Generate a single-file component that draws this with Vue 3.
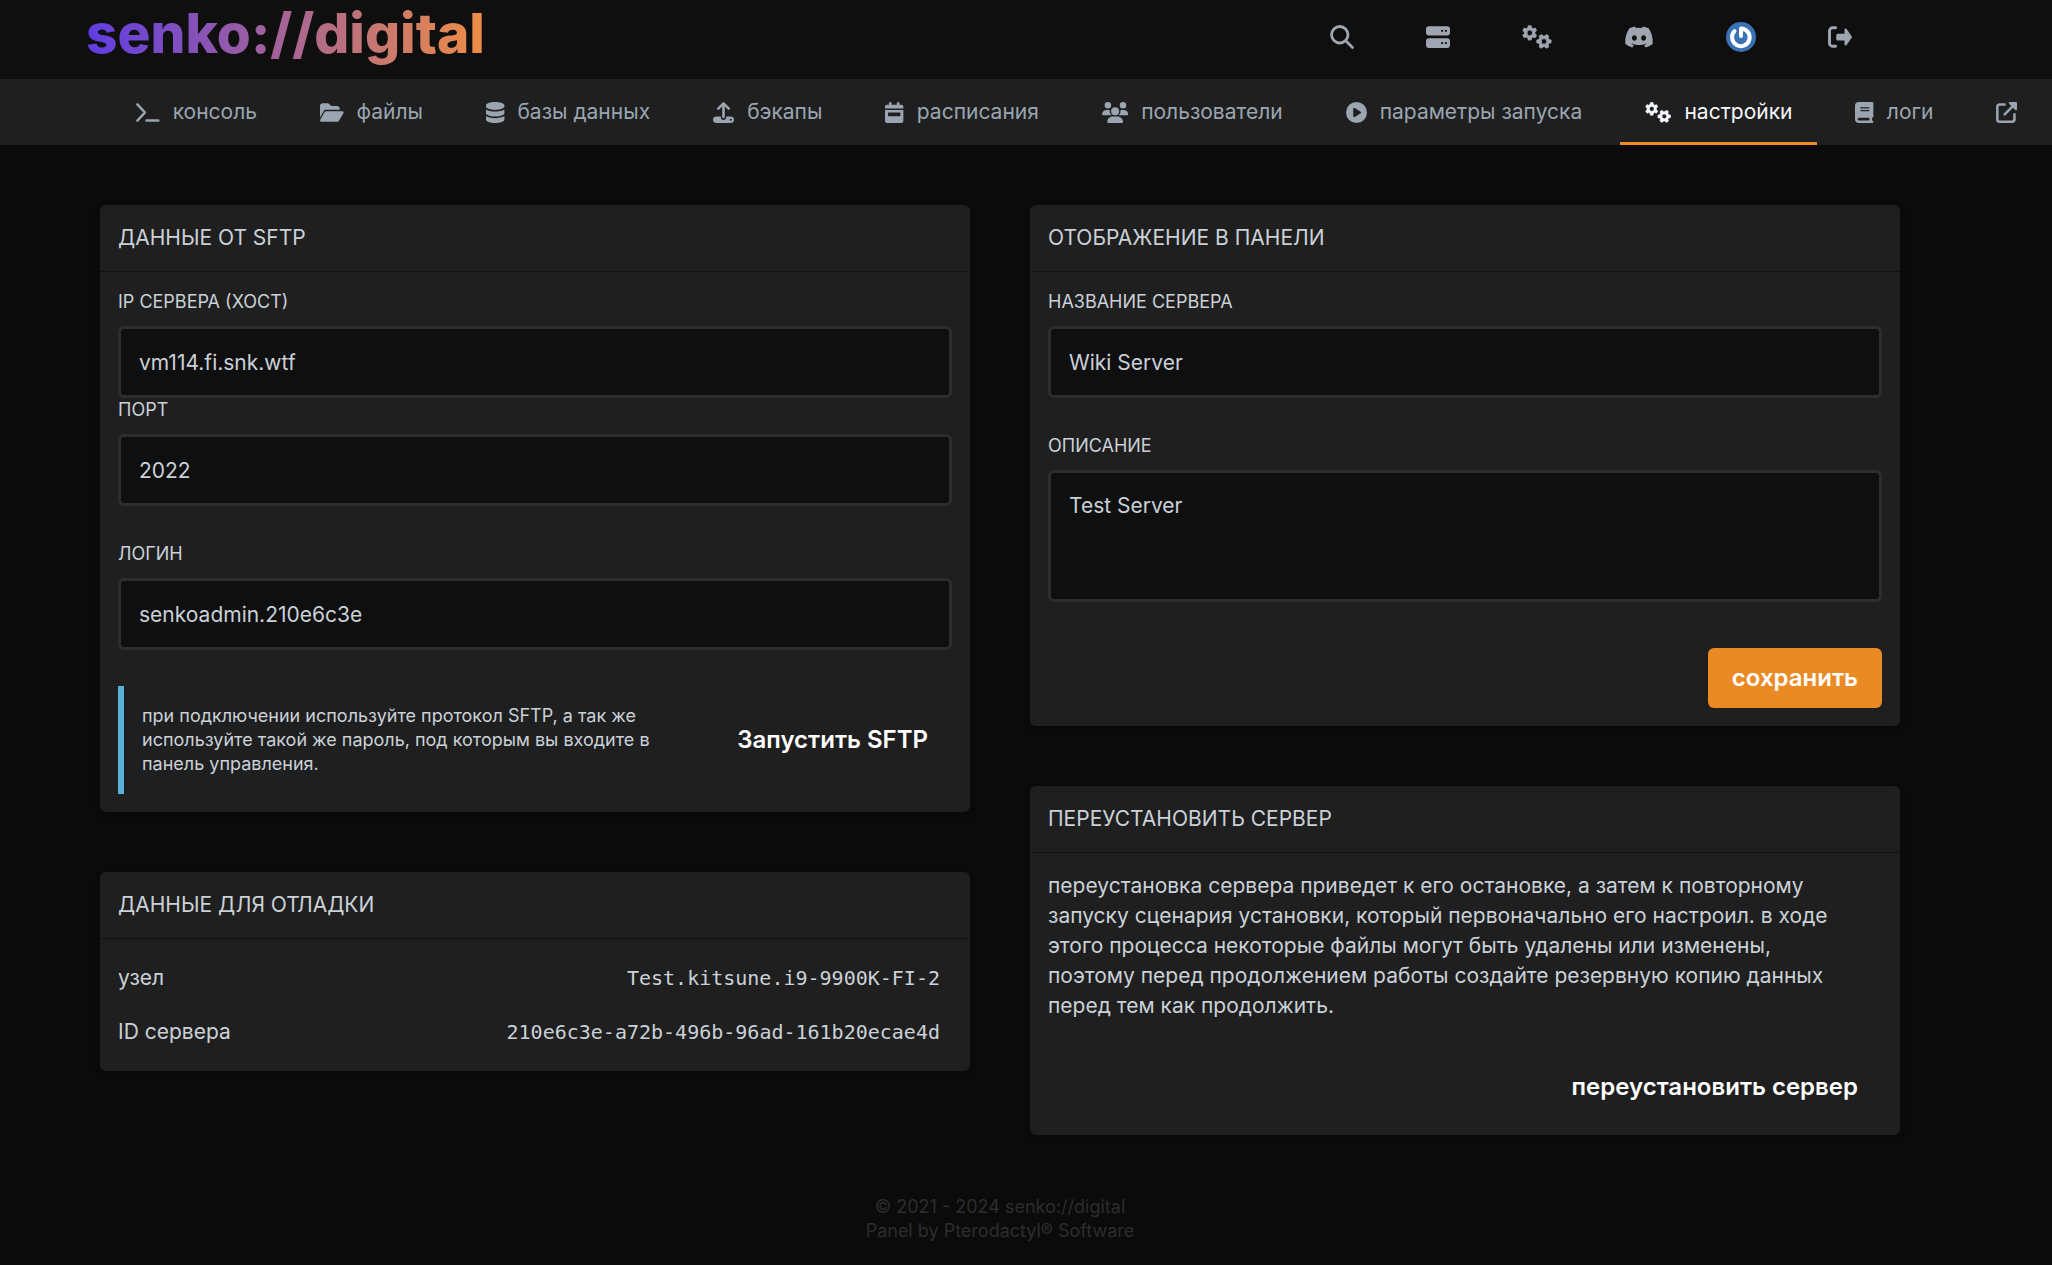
<script setup>
import { ref } from 'vue'

// Outline of a cog wheel with six teeth and a round hole, in icon units.
function gear(cx, cy, outer, inner, hole, turn) {
  const points = []
  for (let i = 0; i < 6; i++) {
    const base = ((i * 60 + turn) * Math.PI) / 180
    const steps = [[-0.36, inner], [-0.2, outer], [0.2, outer], [0.36, inner]]
    for (const [offset, radius] of steps) {
      const x = cx + radius * Math.cos(base + offset)
      const y = cy + radius * Math.sin(base + offset)
      points.push(`${x.toFixed(1)} ${y.toFixed(1)}`)
    }
  }
  return `M${points.join('L')}ZM${cx - hole} ${cy}a${hole} ${hole} 0 1 0 ${hole * 2} 0a${hole} ${hole} 0 1 0 ${-hole * 2} 0Z`
}

const cogs = gear(164, 168, 156, 116, 60, 30) + gear(468, 350, 156, 116, 60, 0)

const icons = {
  search: {
    w: 512,
    lines: [{ d: 'M384 208A176 176 0 1 1 32 208A176 176 0 1 1 384 208ZM336 336L480 480', s: 60 }],
  },
  server: {
    w: 512,
    fill: 'M64 24H448a64 64 0 0 1 64 64V160a64 64 0 0 1-64 64H64A64 64 0 0 1 0 160V88A64 64 0 0 1 64 24ZM320 124a24 24 0 1 0 48 0a24 24 0 1 0-48 0ZM400 124a24 24 0 1 0 48 0a24 24 0 1 0-48 0ZM64 280H448a64 64 0 0 1 64 64V424a64 64 0 0 1-64 64H64A64 64 0 0 1 0 424V344A64 64 0 0 1 64 280ZM320 384a24 24 0 1 0 48 0a24 24 0 1 0-48 0ZM400 384a24 24 0 1 0 48 0a24 24 0 1 0-48 0Z',
  },
  gears: {
    w: 640,
    fill: cogs,
    lines: [{ d: cogs, s: 16 }],
  },
  discord: {
    w: 640,
    fill: 'M524.531,69.836a1.5,1.5,0,0,0-.764-.7A485.065,485.065,0,0,0,404.081,32.03a1.816,1.816,0,0,0-1.923.91,337.461,337.461,0,0,0-14.9,30.6,447.848,447.848,0,0,0-134.426,0,309.541,309.541,0,0,0-15.135-30.6,1.89,1.89,0,0,0-1.924-.91A483.689,483.689,0,0,0,116.085,69.137a1.712,1.712,0,0,0-.788.676C39.068,183.651,18.186,294.69,28.43,404.354a2.016,2.016,0,0,0,.765,1.375A487.666,487.666,0,0,0,176.02,479.918a1.9,1.9,0,0,0,2.063-.676A348.2,348.2,0,0,0,208.12,430.4a1.86,1.86,0,0,0-1.019-2.588,321.173,321.173,0,0,1-45.868-21.853,1.885,1.885,0,0,1-.185-3.126c3.082-2.309,6.166-4.711,9.109-7.137a1.819,1.819,0,0,1,1.9-.256c96.229,43.917,200.41,43.917,295.5,0a1.812,1.812,0,0,1,1.924.233c2.944,2.426,6.027,4.851,9.132,7.16a1.884,1.884,0,0,1-.162,3.126,301.407,301.407,0,0,1-45.89,21.83,1.875,1.875,0,0,0-1,2.611,391.055,391.055,0,0,0,30.014,48.815,1.864,1.864,0,0,0,2.063.7A486.048,486.048,0,0,0,610.7,405.729a1.882,1.882,0,0,0,.765-1.352C623.729,277.594,590.933,167.465,524.531,69.836ZM222.491,337.58c-28.972,0-52.844-26.587-52.844-59.239S193.056,219.1,222.491,219.1c29.665,0,53.306,26.82,52.843,59.239C275.334,310.993,251.924,337.58,222.491,337.58Zm195.38,0c-28.971,0-52.843-26.587-52.843-59.239S388.437,219.1,417.871,219.1c29.667,0,53.307,26.82,52.844,59.239C470.715,310.993,447.538,337.58,417.871,337.58Z',
  },
  signOut: {
    w: 512,
    fill: 'M352 104c0-24 28-36 44-20L504 238c10 10 10 26 0 36L396 428c-16 16-44 4-44-20V328H208a32 32 0 0 1-32-32V216a32 32 0 0 1 32-32H352Z',
    lines: [{ d: 'M162 60H96a64 64 0 0 0-64 64V388a64 64 0 0 0 64 64H162', s: 62 }],
  },
  terminal: {
    w: 576,
    lines: [{ d: 'M34 60L218 256L34 452M256 452H544', s: 62 }],
  },
  folder: {
    w: 576,
    fill: 'M88.7 223.8L0 375.8V96C0 60.7 28.7 32 64 32H181.5c17 0 33.3 6.7 45.3 18.7l26.5 26.5c12 12 28.3 18.7 45.3 18.7H416c35.3 0 64 28.7 64 64v32H144c-22.8 0-43.8 12.1-55.3 31.8zm27.6 16.1C122.1 230 132.6 224 144 224H544c11.5 0 22 6.1 27.7 16.1s5.7 22.2-.1 32.1l-112 192C453.9 474 443.4 480 432 480H32c-11.5 0-22-6.1-27.7-16.1s-5.7-22.2 .1-32.1l112-192z',
  },
  database: {
    w: 448,
    fill: 'M448 80V112C448 156 348 192 224 192S0 156 0 112V80C0 36 100 0 224 0S448 36 448 80ZM0 182C52 218 138 234 224 234S396 218 448 182V272C448 316 348 352 224 352S0 316 0 272ZM0 342C52 378 138 394 224 394S396 378 448 342V432C448 476 348 512 224 512S0 476 0 432Z',
  },
  upload: {
    w: 512,
    fill: 'M96 352H192V372a64 64 0 0 0 128 0V352H416a96 80 0 0 1 96 80a96 80 0 0 1-96 80H96a96 80 0 0 1-96-80a96 80 0 0 1 96-80ZM408 432a24 24 0 1 0 48 0a24 24 0 1 0-48 0Z',
    lines: [{ d: 'M256 364V44M128 160L256 34L384 160', s: 64 }],
  },
  calendar: {
    w: 448,
    fill: 'M128 0a32 32 0 0 1 32 32V64H288V32a32 32 0 0 1 64 0V64H400a48 48 0 0 1 48 48V160H0V112A48 48 0 0 1 48 64H96V32A32 32 0 0 1 128 0ZM0 192H448V464a48 48 0 0 1-48 48H48A48 48 0 0 1 0 464ZM96 256a24 24 0 0 0-24 24v46a24 24 0 0 0 24 24H352a24 24 0 0 0 24-24v-46a24 24 0 0 0-24-24Z',
  },
  users: {
    w: 640,
    fill: 'M64 80a80 80 0 1 0 160 0a80 80 0 1 0-160 0ZM432 80a80 80 0 1 0 160 0a80 80 0 1 0-160 0ZM222 224a98 98 0 1 0 196 0a98 98 0 1 0-196 0ZM107 192H149c24 0 30 4 44 12c-12 48 8 88 38 116H21A21 21 0 0 1 0 299C0 240 48 192 107 192ZM533 192H491c-24 0-30 4-44 12c12 48-8 88-38 116H619A21 21 0 0 0 640 299C640 240 592 192 533 192ZM128 485C128 412 188 352 261 352H379C452 352 512 412 512 485A27 27 0 0 1 485 512H155A27 27 0 0 1 128 485Z',
  },
  play: {
    w: 512,
    fill: 'M0 256a256 256 0 1 0 512 0a256 256 0 1 0-512 0ZM188 147c8-4 17-4 25 0L357 235c16 10 16 32 0 42L213 365c-17 9-37-2-37-21V168c0-9 5-17 12-21Z',
  },
  book: {
    w: 448,
    fill: 'M96 0A96 96 0 0 0 0 96V416a96 96 0 0 0 96 96H416a32 32 0 0 0 0-64V384a32 32 0 0 0 32-32V32A32 32 0 0 0 416 0ZM96 384H352V448H96a32 32 0 0 1 0-64ZM144 128H336a16 16 0 0 1 0 32H144a16 16 0 0 1 0-32ZM144 192H336a16 16 0 0 1 0 32H144a16 16 0 0 1 0-32Z',
  },
  external: {
    w: 512,
    fill: 'M336 0H488a24 24 0 0 1 24 24V176c0 22-26 32-41 17L320 41C304 26 314 0 336 0Z',
    lines: [{ d: 'M210 62H94a62 62 0 0 0-62 62V418a62 62 0 0 0 62 62H388a62 62 0 0 0 62-62V302M212 300L430 82', s: 62 }],
  },
}

const topLinks = [
  { icon: 'search', title: 'поиск' },
  { icon: 'server', title: 'серверы' },
  { icon: 'gears', title: 'администрирование' },
  { icon: 'discord', title: 'Discord' },
  { icon: 'avatar', title: 'аккаунт' },
  { icon: 'signOut', title: 'выйти' },
]

const tabs = [
  { icon: 'terminal', text: 'консоль' },
  { icon: 'folder', text: 'файлы' },
  { icon: 'database', text: 'базы данных' },
  { icon: 'upload', text: 'бэкапы' },
  { icon: 'calendar', text: 'расписания' },
  { icon: 'users', text: 'пользователи' },
  { icon: 'play', text: 'параметры запуска' },
  { icon: 'gears', text: 'настройки', active: true },
  { icon: 'book', text: 'логи' },
  { icon: 'external', text: '' },
]

const name = ref('Wiki Server')
const description = ref('Test Server')
</script>

<template>
  <div class="page">
    <header class="topbar">
      <div class="container topbar-row">
        <a class="logo" href="#">senko://digital</a>
        <nav class="top-links">
          <a v-for="link in topLinks" :key="link.icon" href="#" :aria-label="link.title">
            <svg v-if="link.icon === 'avatar'" class="avatar" viewBox="0 0 30 30">
              <circle cx="15" cy="15" r="15" fill="#3a72b4" />
              <path d="M15 14V6.500A8.800 8.800 0 1 1 8.500 9.200" fill="none" stroke="#fff" stroke-width="4" stroke-linecap="round" stroke-linejoin="round" />
            </svg>
            <svg v-else class="icon" :viewBox="`0 0 ${icons[link.icon].w} 512`">
              <path v-if="icons[link.icon].fill" :d="icons[link.icon].fill" class="solid" />
              <path v-for="line in icons[link.icon].lines" :key="line.d" :d="line.d" :stroke-width="line.s" class="line" />
            </svg>
          </a>
        </nav>
      </div>
    </header>

    <nav class="tabs">
      <a v-for="tab in tabs" :key="tab.icon" href="#" class="tab" :class="{ active: tab.active }" :aria-label="tab.text || 'открыть в админке'">
        <svg class="icon" :viewBox="`0 0 ${icons[tab.icon].w} 512`">
          <path v-if="icons[tab.icon].fill" :d="icons[tab.icon].fill" class="solid" />
          <path v-for="line in icons[tab.icon].lines" :key="line.d" :d="line.d" :stroke-width="line.s" class="line" />
        </svg>
        <span v-if="tab.text">{{ tab.text }}</span>
      </a>
    </nav>

    <main class="container columns">
      <div class="column">
        <section class="panel">
          <h2>ДАННЫЕ ОТ SFTP</h2>
          <div class="panel-body">
            <div class="field">
              <label for="host">IP СЕРВЕРА (ХОСТ)</label>
              <input id="host" type="text" value="vm114.fi.snk.wtf" readonly />
            </div>
            <div class="field">
              <label for="port">ПОРТ</label>
              <input id="port" type="text" value="2022" readonly />
            </div>
            <div class="field spaced">
              <label for="login">ЛОГИН</label>
              <input id="login" type="text" value="senkoadmin.210e6c3e" readonly />
            </div>
            <div class="sftp spaced">
              <p class="note">при подключении используйте протокол SFTP, а так же используйте такой же пароль, под которым вы входите в панель управления.</p>
              <button type="button" class="plain">Запустить SFTP</button>
            </div>
          </div>
        </section>

        <section class="panel">
          <h2>ДАННЫЕ ДЛЯ ОТЛАДКИ</h2>
          <dl class="panel-body debug">
            <div class="debug-row">
              <dt>узел</dt>
              <dd>Test.kitsune.i9-9900K-FI-2</dd>
            </div>
            <div class="debug-row">
              <dt>ID сервера</dt>
              <dd>210e6c3e-a72b-496b-96ad-161b20ecae4d</dd>
            </div>
          </dl>
        </section>
      </div>

      <div class="column">
        <section class="panel">
          <h2>ОТОБРАЖЕНИЕ В ПАНЕЛИ</h2>
          <form class="panel-body" @submit.prevent>
            <div class="field">
              <label for="name">НАЗВАНИЕ СЕРВЕРА</label>
              <input id="name" v-model="name" type="text" />
            </div>
            <div class="field spaced">
              <label for="description">ОПИСАНИЕ</label>
              <textarea id="description" v-model="description" rows="3"></textarea>
            </div>
            <div class="actions save">
              <button type="submit" class="primary">сохранить</button>
            </div>
          </form>
        </section>

        <section class="panel">
          <h2>ПЕРЕУСТАНОВИТЬ СЕРВЕР</h2>
          <div class="panel-body">
            <p class="warning">переустановка сервера приведет к его остановке, а затем к повторному запуску сценария установки, который первоначально его настроил. в ходе этого процесса некоторые файлы могут быть удалены или изменены, поэтому перед продолжением работы создайте резервную копию данных перед тем как продолжить.</p>
            <div class="actions spaced">
              <button type="button" class="plain">переустановить сервер</button>
            </div>
          </div>
        </section>
      </div>
    </main>

    <footer class="footer">
      <p>© 2021 - 2024 senko://digital</p>
      <p>Panel by <a href="#">Pterodactyl® Software</a></p>
    </footer>
  </div>
</template>

<style>
body {
  margin: 0;
  background: #0b0b0b;
}
</style>

<style scoped>
.page {
  min-height: 100vh;
  color: #cad1d8;
  font-family: Inter, "Liberation Sans", sans-serif;
  font-size: 21px;
  line-height: 30px;
}
.page *,
.page {
  box-sizing: border-box;
}
h2,
p,
dl,
dd {
  margin: 0;
}
a {
  color: inherit;
  text-decoration: none;
}
.container {
  max-width: 1800px;
  margin: 0 auto;
}
.topbar,
.columns,
.footer {
  padding-right: 52px;
}
.topbar {
  background: #0f0f0f;
}
.topbar-row {
  display: flex;
  align-items: center;
  justify-content: space-between;
  height: 79px;
  padding-right: 48px;
}
.logo {
  margin-left: -14px;
  padding-bottom: 14px;
  font-size: 55px;
  font-weight: 800;
  line-height: 66px;
  color: transparent;
  background: linear-gradient(90deg, #5f3ce4, #ee8d45);
  background-clip: text;
}
.top-links {
  display: flex;
  align-items: center;
  gap: 72px;
  padding-bottom: 6px;
  color: #9fa6b2;
}
.top-links a {
  display: flex;
}
.top-links .icon {
  height: 24px;
}
.avatar {
  width: 30px;
  height: 30px;
}
.icon {
  display: block;
  height: 21px;
  overflow: visible;
}
.solid {
  fill: currentColor;
  fill-rule: evenodd;
}
.line {
  fill: none;
  stroke: currentColor;
  stroke-linecap: round;
  stroke-linejoin: round;
}
.tabs {
  display: flex;
  gap: 13px;
  padding-left: 111px;
  background: #1f1f1f;
  color: #9aa5b1;
}
.tab {
  display: flex;
  align-items: center;
  gap: 13px;
  height: 66px;
  padding: 0 25px;
  white-space: nowrap;
}
.tab.active {
  color: #f5f7fa;
  box-shadow: inset 0 -3px #ee8a22;
}
.columns {
  display: grid;
  grid-template-columns: repeat(2, minmax(0, 1fr));
  gap: 60px;
  max-width: 1852px;
  padding-top: 60px;
}
.column {
  display: flex;
  flex-direction: column;
  gap: 60px;
}
.panel {
  background: #1f1f1f;
  border-radius: 6px;
  box-shadow: 0 3px 6px rgba(0, 0, 0, 0.2);
}
h2 {
  padding: 18px;
  border-bottom: 1px solid #131313;
  font-size: 21px;
  font-weight: 400;
  line-height: 30px;
}
.panel-body {
  padding: 18px;
}
.field {
  display: flex;
  flex-direction: column;
  gap: 12px;
}
.spaced {
  margin-top: 36px;
}
label {
  font-size: 18px;
  line-height: 24px;
}
input,
textarea {
  display: block;
  width: 100%;
  padding: 18px;
  border: 3px solid #2d2d2d;
  border-radius: 6px;
  background: #0f0f0f;
  color: #cad1d8;
  font: inherit;
  outline: none;
  resize: none;
}
input {
  height: 72px;
}
textarea {
  height: 132px;
}
.sftp {
  display: flex;
  align-items: center;
  gap: 24px;
}
.note {
  flex: 1;
  padding: 18px;
  border-left: 6px solid #59b1d9;
  font-size: 18px;
  line-height: 24px;
}
.warning {
  padding-right: 24px;
}
button {
  height: 60px;
  padding: 0 24px;
  border: 0;
  border-radius: 6px;
  color: #fff;
  font: inherit;
  font-size: 24px;
  font-weight: 600;
}
.plain {
  background: transparent;
}
.primary {
  background: #ea8a25;
}
.actions {
  display: flex;
  justify-content: flex-end;
}
.save {
  margin-top: 46px;
}
.debug {
  display: flex;
  flex-direction: column;
  gap: 12px;
}
.debug-row {
  display: flex;
  align-items: center;
  justify-content: space-between;
  height: 42px;
}
dd {
  padding: 0 12px;
  font-family: "DejaVu Sans Mono", "Liberation Mono", monospace;
  font-size: 20px;
}
.footer {
  padding-top: 60px;
  padding-bottom: 22px;
  color: #2d2d2d;
  font-size: 18px;
  line-height: 24px;
  text-align: center;
}
</style>
